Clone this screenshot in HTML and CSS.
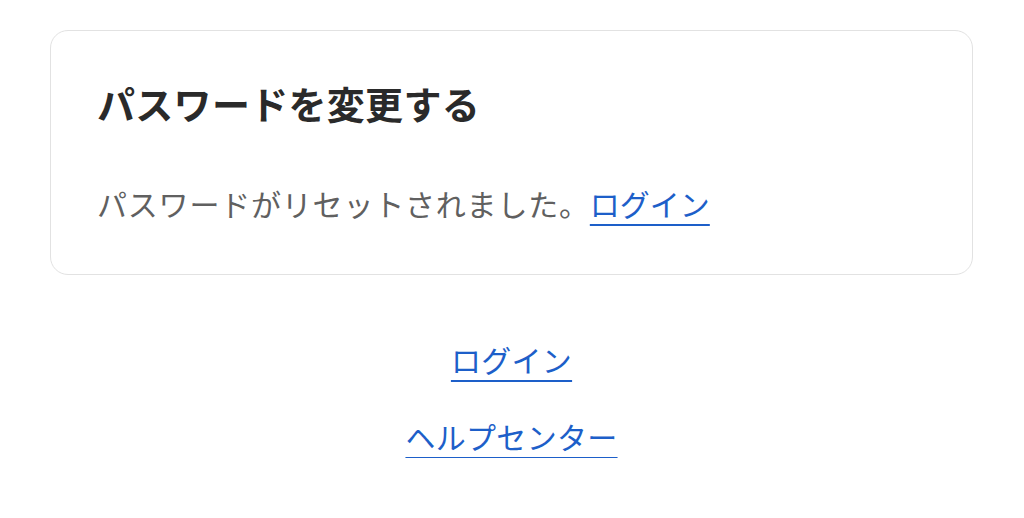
FILE: index.html
```html
<!DOCTYPE html>
<html lang="ja">
<head>
<meta charset="utf-8">
<title>パスワードを変更する</title>
<link rel="stylesheet" href="styles.css">
</head>
<body>
<main class="page">
  <section class="card">
    <h1 class="card-title">パスワードを変更する</h1>
    <p class="card-text">パスワードがリセットされました。<a class="link" href="#">ログイン</a></p>
  </section>
  <nav class="footer-links">
    <a class="link" href="#">ログイン</a>
    <a class="link" href="#">ヘルプセンター</a>
  </nav>
</main>
</body>
</html>
```

FILE: styles.css
```css
html, body {
  margin: 0;
  padding: 0;
  background: #ffffff;
}

body {
  font-family: "Noto Sans CJK JP", "Noto Sans", sans-serif;
  color: #2b2b2b;
}

.page {
  padding: 30px 51px 0 50px;
  display: flex;
  flex-direction: column;
}

.card {
  border: 1px solid #e2e2e2;
  border-radius: 18px;
  padding: 49px 46px 49px 46px;
}

.card-title {
  margin: 0;
  font-size: 38px;
  line-height: 46px;
  font-weight: 700;
  letter-spacing: 0.3px;
  color: #2a2a2a;
}

.card-text {
  margin: 55px 0 0 0;
  font-size: 30px;
  line-height: 44px;
  letter-spacing: 0.8px;
  color: #606060;
}

.card-text .link {
  letter-spacing: 0;
}

.link {
  color: #1d5fc9;
  text-decoration: underline;
  text-decoration-thickness: 2px;
  text-underline-offset: 8px;
}

.footer-links {
  margin-top: 62px;
  display: flex;
  flex-direction: column;
  align-items: center;
  gap: 33px;
  font-size: 30px;
  line-height: 44px;
  letter-spacing: 0.3px;
}
```
